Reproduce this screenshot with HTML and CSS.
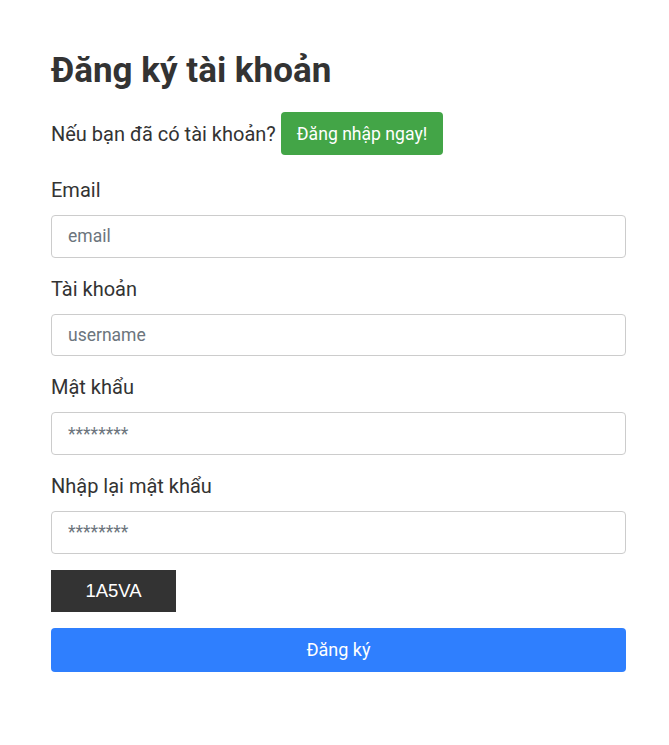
FILE: index.html
```html
<!DOCTYPE html>
<html lang="vi">
<head>
<meta charset="utf-8">
<title>Đăng ký tài khoản</title>
<link rel="stylesheet" href="styles.css">
</head>
<body>
<main class="page">
  <h1 class="title">Đăng ký tài khoản</h1>
  <p class="login-line">Nếu bạn đã có tài khoản? <a class="btn-login" href="#">Đăng nhập ngay!</a></p>
  <form class="form">
    <div class="field">
      <label class="label" for="email">Email</label>
      <input class="input" id="email" type="text" placeholder="email">
    </div>
    <div class="field">
      <label class="label" for="user">Tài khoản</label>
      <input class="input" id="user" type="text" placeholder="username">
    </div>
    <div class="field">
      <label class="label" for="pw">Mật khẩu</label>
      <input class="input" id="pw" type="text" placeholder="********">
    </div>
    <div class="field field--last">
      <label class="label" for="pw2">Nhập lại mật khẩu</label>
      <input class="input" id="pw2" type="text" placeholder="********">
    </div>
    <div class="captcha">1A5VA</div>
    <button class="btn-submit" type="button">Đăng ký</button>
  </form>
</main>
</body>
</html>
```

FILE: styles.css
```css
* { box-sizing: border-box; }
body {
  margin: 0;
  background: #fff;
  font-family: Roboto, "Noto Sans", sans-serif;
  color: #333;
}
.page {
  width: 575px;
  margin-left: 51px;
  padding-top: 46px;
}
.title {
  margin: 0;
  font-size: 35px;
  font-weight: 700;
  line-height: 50px;
  color: #333;
}
.login-line {
  margin: 16px 0 0;
  display: flex;
  align-items: center;
  gap: 5px;
  font-size: 20px;
  color: #333;
}
.btn-login {
  display: inline-flex;
  align-items: center;
  height: 43px;
  padding: 0 16px;
  background: #43a547;
  color: #fff;
  border-radius: 4px;
  text-decoration: none;
  font-size: 17.6px;
}
.form {
  display: flex;
  flex-direction: column;
  margin-top: 23px;
}
.field {
  display: flex;
  flex-direction: column;
  margin-bottom: 19px;
}
.field--last { margin-bottom: 16px; }
.label {
  font-size: 20px;
  line-height: 24px;
  margin-bottom: 13px;
  color: #333;
}
.input {
  height: 42.7px;
  border: 1px solid #ccc;
  border-radius: 4px;
  padding: 0 16px;
  font-family: Roboto, "Noto Sans", sans-serif;
  font-size: 17.5px;
  color: #333;
  outline: none;
}
.input::placeholder { color: #6c757d; }
.captcha {
  width: 125px;
  height: 42px;
  background: #333;
  color: #fff;
  display: flex;
  align-items: center;
  justify-content: center;
  font-family: "Liberation Sans", Arial, sans-serif;
  font-size: 18.5px;
}
.btn-submit {
  margin-top: 16px;
  height: 44px;
  width: 100%;
  border: none;
  border-radius: 4px;
  background: #2f7ffe;
  color: #fff;
  font-family: Roboto, "Noto Sans", sans-serif;
  font-size: 18px;
}
```
